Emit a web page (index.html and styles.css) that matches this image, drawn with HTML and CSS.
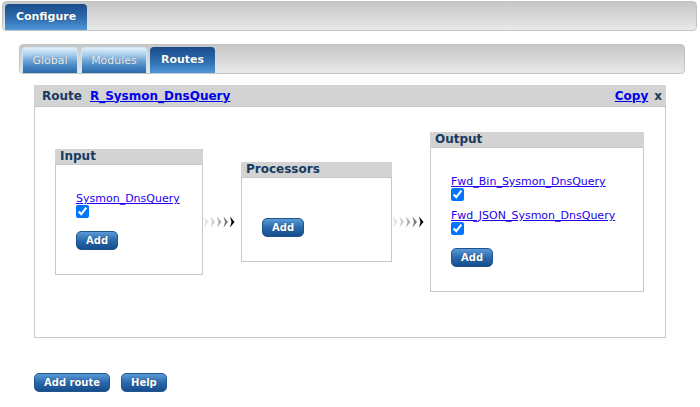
FILE: index.html
```html
<!DOCTYPE html>
<html>
<head>
<meta charset="utf-8">
<link rel="stylesheet" href="styles.css">
</head>
<body>
<div class="topbar">
  <div class="tab tab-active">Configure</div>
</div>
<div class="subbar">
  <div class="tab tab-light">Global</div>
  <div class="tab tab-light">Modules</div>
  <div class="tab tab-active">Routes</div>
</div>
<div class="route">
  <div class="route-head">
    <span class="route-label">Route</span>
    <a href="#" class="route-name">R_Sysmon_DnsQuery</a>
    <span class="spacer"></span>
    <a href="#" class="route-name">Copy</a>
    <span class="route-x">x</span>
  </div>
  <div class="route-body">
    <div class="box box-input">
      <div class="box-head">Input</div>
      <div class="box-body">
        <div class="items">
          <div class="item"><a href="#" class="item-link">Sysmon_DnsQuery</a><input type="checkbox" class="cb" checked></div>
        </div>
        <button class="btn box-btn">Add</button>
      </div>
    </div>
    <div class="arrow">
      <svg width="34" height="12" viewBox="0 0 34 12">
        <path d="M0 0.5 L4.5 6 L0 11.5 L1.5 6 Z" fill="#e2e2e2"/>
        <path d="M6.5 0.5 L11 6 L6.5 11.5 L8 6 Z" fill="#cfcfcf"/>
        <path d="M13 0.5 L17.5 6 L13 11.5 L14.5 6 Z" fill="#acacac"/>
        <path d="M19.5 0.5 L24 6 L19.5 11.5 L21 6 Z" fill="#7a7a7a"/>
        <path d="M26 0.5 L30.5 6 L26 11.5 L27.5 6 Z" fill="#000"/>
      </svg>
    </div>
    <div class="box box-proc">
      <div class="box-head">Processors</div>
      <div class="box-body">
        <div class="items"></div>
        <button class="btn box-btn">Add</button>
      </div>
    </div>
    <div class="arrow">
      <svg width="34" height="12" viewBox="0 0 34 12">
        <path d="M0 0.5 L4.5 6 L0 11.5 L1.5 6 Z" fill="#e2e2e2"/>
        <path d="M6.5 0.5 L11 6 L6.5 11.5 L8 6 Z" fill="#cfcfcf"/>
        <path d="M13 0.5 L17.5 6 L13 11.5 L14.5 6 Z" fill="#acacac"/>
        <path d="M19.5 0.5 L24 6 L19.5 11.5 L21 6 Z" fill="#7a7a7a"/>
        <path d="M26 0.5 L30.5 6 L26 11.5 L27.5 6 Z" fill="#000"/>
      </svg>
    </div>
    <div class="box box-output">
      <div class="box-head">Output</div>
      <div class="box-body">
        <div class="items">
          <div class="item"><a href="#" class="item-link">Fwd_Bin_Sysmon_DnsQuery</a><input type="checkbox" class="cb" checked></div>
          <div class="item"><a href="#" class="item-link">Fwd_JSON_Sysmon_DnsQuery</a><input type="checkbox" class="cb" checked></div>
        </div>
        <button class="btn box-btn">Add</button>
      </div>
    </div>
  </div>
</div>
<div class="actions">
  <button class="btn">Add route</button>
  <button class="btn">Help</button>
</div>
</body>
</html>
```
FILE: styles.css
```css
html, body {
  margin: 0;
  padding: 0;
  background: #fff;
}
body {
  padding-top: 1px;
  font-family: "DejaVu Sans", Verdana, sans-serif;
  font-size: 11px;
  color: #000;
}
.topbar {
  margin: 0 3px 0 2px;
  height: 28px;
  border: 1px solid #c4c4c4;
  border-radius: 4px;
  background: linear-gradient(#c6c6c6, #e9e9e9);
  display: flex;
  align-items: flex-end;
  padding-left: 2px;
}
.tab {
  height: 26px;
  line-height: 26px;
  border-radius: 4px 4px 0 0;
  text-align: center;
  box-sizing: border-box;
  font-size: 11px;
}
.tab-active {
  background: linear-gradient(#1a4b8b, #2d6db0 55%, #4f98d8);
  color: #fff;
  font-weight: bold;
  text-shadow: 0 0 1px #0d2f5c;
}
.topbar .tab {
  width: 82px;
}
.subbar {
  margin: 13px 0 0 19px;
  width: 662px;
  height: 28px;
  box-sizing: content-box;
  border: 1px solid #c4c4c4;
  border-radius: 4px;
  background: linear-gradient(#c6c6c6, #e9e9e9);
  display: flex;
  align-items: flex-end;
  gap: 3px;
  padding-left: 2px;
}
.tab-light {
  background: linear-gradient(#e0f0fb, #a6cdec 28%, #6aa2d4 52%, #4180c0 78%, #2e6aab);
  color: #ececec;
  text-shadow: 0 0 1px #4e6f92;
  border: 1px solid #d0e4f2;
  border-bottom: none;
  line-height: 25px;
}
.subbar .tab:nth-child(1) { width: 56px; }
.subbar .tab:nth-child(2) { width: 66px; }
.subbar .tab:nth-child(3) { width: 65px; }
.route {
  margin: 11px 0 0 34px;
  width: 632px;
}
.route-head {
  height: 21px;
  background: #d3d3d3;
  border-bottom: 1px solid #c4c4c4;
  display: flex;
  align-items: center;
  padding: 0 4px 0 8px;
  font-size: 12px;
  font-weight: bold;
}
.route-label {
  color: #163a62;
  margin-right: 8px;
}
.route-name {
  color: #0000ee;
}
.spacer {
  flex: 1;
}
.route-x {
  color: #163a62;
  margin-left: 6px;
}
.route-body {
  border: 1px solid #c8c8c8;
  border-top: none;
  padding: 25px 0 25px 20px;
  display: flex;
  align-items: center;
}
.box {
  margin-bottom: 20px;
  box-sizing: border-box;
}
.box-input { width: 148px; }
.box-proc { width: 151px; }
.box-output { width: 214px; }
.box-head {
  height: 15px;
  line-height: 15px;
  background: #d3d3d3;
  font-size: 12px;
  font-weight: bold;
  color: #163a62;
  padding-left: 5px;
}
.box-body {
  border: 1px solid #c8c8c8;
  padding: 27px 10px 24px 20px;
}
.items {
  display: flex;
  flex-direction: column;
  gap: 8px;
}
.item {
  display: flex;
  flex-direction: column;
  align-items: flex-start;
}
.item-link {
  color: #2200ee;
  line-height: 13px;
  font-size: 11px;
}
.cb {
  margin: 0;
  width: 13px;
  height: 13px;
  display: block;
}
.arrow {
  width: 38px;
  display: flex;
  align-items: center;
  padding-left: 1px;
  box-sizing: border-box;
}
.arrow svg {
  display: block;
}
.btn {
  height: 19px;
  padding: 0 9px;
  border: 1px solid #1f5490;
  border-radius: 5px;
  background: linear-gradient(#5a9ad6, #2a69ad 50%, #164d8c);
  color: #fff;
  font-family: "DejaVu Sans", Verdana, sans-serif;
  font-size: 10px;
  font-weight: bold;
  text-shadow: 0 0 1px #0b2b52;
  line-height: 17px;
  cursor: pointer;
}
.box-btn {
  display: block;
  margin-top: 13px;
}
.actions {
  margin: 35px 0 0 34px;
  display: flex;
  gap: 11px;
}
```
